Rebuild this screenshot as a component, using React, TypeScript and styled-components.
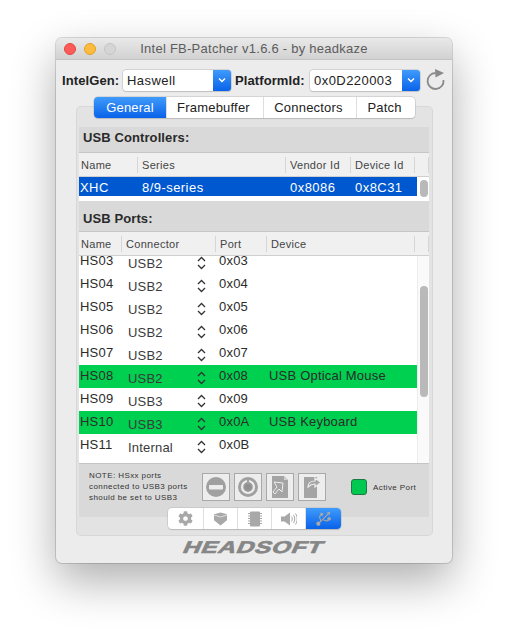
import React from "react";
import styled, { createGlobalStyle } from "styled-components";
import { FaCog, FaUsb } from "react-icons/fa";

const Global = createGlobalStyle`
  html, body { margin: 0; padding: 0; background: #fff; height: 100%; overflow: hidden; }
  body { font-family: "Liberation Sans", Arial, sans-serif; color: #222; }
  * { box-sizing: border-box; }
`;
const Page = styled.div`
  width: 508px; height: 637px; padding: 38px 56px 0; overflow: hidden;
`;
const Win = styled.div`
  width: 396px; height: 525px; border-radius: 6px; background: #ececec;
  box-shadow: 0 0 0 1px rgba(0,0,0,.14), 0 18px 45px rgba(0,0,0,.32);
  display: flex; flex-direction: column; align-items: stretch; overflow: hidden;
`;
const TitleBar = styled.div`
  height: 22px; flex: none; display: flex; align-items: center; padding-left: 8px; gap: 8px;
  position: relative;
  background: linear-gradient(#e9e9e9, #d2d2d2); border-bottom: 1px solid #c4c4c4;
`;
const Light = styled.span<{ $c: string; $b: string }>`
  width: 12px; height: 12px; border-radius: 50%; background: ${p => p.$c};
  border: 1px solid ${p => p.$b};
`;
const Title = styled.div`
  position: absolute; left: 0; right: 0; top: 3px; text-align: center; font-size: 13px; line-height: 16px;
  color: #5c5c5c; letter-spacing: .25px;
`;
const Toolbar = styled.div`
  height: 21px; margin-top: 10px; flex: none; display: flex; align-items: center; padding-left: 6px;
`;
const Label = styled.span<{ $w: number; $ml?: number }>`
  font-size: 13px; font-weight: 700; width: ${p => p.$w}px; margin-left: ${p => p.$ml ?? 0}px;
  color: #222; flex: none; letter-spacing: .1px;
`;
const Select = styled.div<{ $w: number }>`
  width: ${p => p.$w}px; height: 21px; flex: none; background: #fff; border-radius: 3px; display: flex;
  align-items: center; justify-content: space-between; padding-left: 4px; font-size: 13px; color: #222;
  box-shadow: 0 0 0 .5px #b9b9b9, 0 1px 1px rgba(0,0,0,.15); letter-spacing: .45px; overflow: hidden;
`;
const SelectBtn = styled.span`
  width: 18px; height: 21px; display: flex; align-items: center; justify-content: center;
  background: linear-gradient(#3f9bfb, #0a62e9);
`;
const Refresh = styled.svg`
  width: 24px; height: 24px; margin: -3px 0 0 4px; flex: none;
`;
const PanelWrap = styled.div`
  flex: none; margin: 16px 20px 0 21px; height: 428px; position: relative;
  background: #e3e3e3; border-radius: 4px; box-shadow: 0 0 0 1px #d7d7d7;
  padding: 20px 3px 0 2px;
`;
const Tabs = styled.div`
  position: absolute; top: -10px; left: 17px; height: 21px; display: flex; background: #fff; border-radius: 4px;
  box-shadow: 0 0 0 .5px #bcbcbc, 0 1px 1px rgba(0,0,0,.18); font-size: 13px; letter-spacing: .2px; overflow: hidden;
`;
const Tab = styled.div<{ $w: number; $on?: boolean }>`
  width: ${p => p.$w}px; display: flex; align-items: center; justify-content: center;
  color: ${p => (p.$on ? "#fff" : "#222")};
  background: ${p => (p.$on ? "linear-gradient(#3f9bfb, #0a62e9)" : "none")};
  & + & { border-left: 1px solid #dedede; padding-right: 3px; }
`;
const Inner = styled.div`
  height: 390px; background: #d9d9d9; display: flex; flex-direction: column;
`;
const SectionTitle = styled.div<{ $h: number; $pt?: number; $pb?: number }>`
  height: ${p => p.$h}px; padding: ${p => p.$pt ?? 0}px 0 ${p => p.$pb ?? 0}px 4px; flex: none; font-size: 13px; font-weight: 700; color: #2a2a2a;
  line-height: 16px; border-bottom: 1px solid #c6c6c6; letter-spacing: .1px;
  display: flex; align-items: center;
`;
const HeaderRow = styled.div<{ $cols: string }>`
  height: 24px; flex: none; display: grid; grid-template-columns: ${p => p.$cols}; background: #f0f0f0;
  border-bottom: 1px solid #cfcfcf; align-items: center; font-size: 11px; color: #444; letter-spacing: .3px;
`;
const HeaderCell = styled.div`
  height: 16px; line-height: 16px; padding-left: 4px; border-right: 1px solid #d6d6d6; overflow: hidden; white-space: nowrap;
  &:first-child { padding-left: 2px; }
`;
const CtrlBody = styled.div`
  height: 24px; flex: none; background: #fff; display: flex; align-items: flex-start;
`;
const CtrlRow = styled.div`
  width: 338px; height: 19px; padding: 1px 0 0 1px; background: #0058d0; color: #fff; font-size: 13px; letter-spacing: .45px;
  display: grid; grid-template-columns: 62px 148px 65px 1fr; align-items: center;
`;
const ThumbCol = styled.div`
  flex: 1; display: flex; justify-content: center; padding-top: 3px;
`;
const MiniThumb = styled.div`
  width: 8px; height: 17px; background: #b9b9b9; border-radius: 4px; margin-left: 1px;
`;
const PortsBody = styled.div`
  height: 208px; flex: none; background: #fff; display: flex; overflow: hidden; border-bottom: 1px solid #c4c4c4;
`;
const PortList = styled.div`
  width: 338px; margin-top: -6px; flex: none;
`;
const PortRow = styled.div<{ $on?: boolean }>`
  height: 23px; display: grid; grid-template-columns: 48px 69px 22px 50px 1fr; padding-left: 1px;
  background: ${p => (p.$on ? "#00d04f" : "transparent")}; font-size: 13px; color: #2b2b2b; letter-spacing: .2px;
  line-height: 21px;
`;
const ConnText = styled.span`
  padding-top: 3px; color: #3a3a3a;
`;
const Chev = styled.svg`
  width: 9px; height: 14px; margin: 6px 0 0 0;
`;
const Scroll = styled.div`
  flex: 1; border-left: 1px solid #ececec; background: #fafafa; padding: 30px 0 0 2px;
`;
const ScrollThumb = styled.div`
  width: 8px; height: 111px; border-radius: 4px; background: #b9b9b9;
`;
const Footer = styled.div`
  flex: 1; display: flex; padding: 5px 0 0 10px;
`;
const Note = styled.div`
  width: 113px; flex: none; padding-top: 1px; font-size: 8px; line-height: 11px; color: #333; letter-spacing: .42px;
`;
const IconButtons = styled.div`
  display: flex; gap: 4px; height: 28px; margin-top: 4px;
`;
const IconBtn = styled.div`
  width: 28px; height: 28px; border: 1px solid #a9a9a9; background: #ededed; display: flex; align-items: center; justify-content: center;
`;
const Active = styled.div`
  display: flex; align-items: center; gap: 6px; margin: 10px 0 0 25px; height: 16px; font-size: 8px; color: #333; letter-spacing: .4px;
`;
const Swatch = styled.span`
  width: 16px; height: 16px; background: #00c850; border: 1px solid #1c7a40; border-radius: 3px;
`;
const Seg = styled.div`
  position: absolute; left: 91px; top: 401px; height: 21px; display: flex; background: #fff; border-radius: 4px;
  box-shadow: 0 0 0 .5px #bcbcbc, 0 1px 1px rgba(0,0,0,.18); overflow: hidden;
`;
const SegItem = styled.div<{ $w: number; $on?: boolean }>`
  width: ${p => p.$w}px; display: flex; align-items: center; justify-content: center; color: #a8a8a8;
  background: ${p => (p.$on ? "linear-gradient(#3f9bfb, #0a62e9)" : "none")};
  & + & { border-left: 1px solid #dedede; }
`;
const UsbIcon = styled(FaUsb)`
  transform: rotate(-45deg);
`;
const LogoWrap = styled.div`
  flex: 1; display: flex; justify-content: center; align-items: flex-start; padding: 4px 0 0 0; overflow: hidden;
`;
const Logo = styled.div`
  font-family: "Liberation Sans", sans-serif; font-weight: 700; font-size: 17px; line-height: 17px;
  color: #868686; letter-spacing: .5px; transform: skewX(-24deg) scaleX(1.43); -webkit-text-stroke: .6px #868686;
`;

const Chevrons = () => (
  <Chev viewBox="0 0 9 14" fill="none" stroke="#333" strokeWidth="1.3">
    <path d="M1 5l3.500-3.500L8 5M1 9l3.500 3.500L8 9" />
  </Chev>
);
const ports: [string, string, string, string][] = [
  ["HS03", "USB2", "0x03", ""], ["HS04", "USB2", "0x04", ""], ["HS05", "USB2", "0x05", ""],
  ["HS06", "USB2", "0x06", ""], ["HS07", "USB2", "0x07", ""], ["HS08", "USB2", "0x08", "USB Optical Mouse"],
  ["HS09", "USB3", "0x09", ""], ["HS10", "USB3", "0x0A", "USB Keyboard"], ["HS11", "Internal", "0x0B", ""],
  ["HS12", "", "0x0C", ""],
];
const Arrow = () => (
  <svg width="10" height="7" viewBox="0 0 10 7" fill="none" stroke="#fff" strokeWidth="1.5"><path d="M2 1.500l3 3 3-3" /></svg>
);

export default function App() {
  return (
    <Page>
      <Global />
      <Win>
        <TitleBar>
          <Light $c="#fc5b57" $b="#e2463f" />
          <Light $c="#fdbc40" $b="#dfa023" />
          <Light $c="#d5d5d5" $b="#c4c4c4" />
          <Title>Intel FB-Patcher v1.6.6 - by headkaze</Title>
        </TitleBar>
        <Toolbar>
          <Label $w={61}>IntelGen:</Label>
          <Select $w={108}>Haswell<SelectBtn><Arrow /></SelectBtn></Select>
          <Label $w={75} $ml={4}>PlatformId:</Label>
          <Select $w={110}>0x0D220003<SelectBtn><Arrow /></SelectBtn></Select>
          <Refresh viewBox="0 0 24 24" fill="none" stroke="#8a8a8a" strokeWidth="1.8">
            <path d="M11.500 6A8 8 0 1 0 19.500 13" />
            <path d="M11 2l9 4-8.500 4.500z" fill="#8a8a8a" stroke="none" />
          </Refresh>
        </Toolbar>
        <PanelWrap>
          <Tabs>
            <Tab $w={72} $on>General</Tab>
            <Tab $w={97}>Framebuffer</Tab>
            <Tab $w={93}>Connectors</Tab>
            <Tab $w={59}>Patch</Tab>
          </Tabs>
          <Inner>
            <SectionTitle $h={26} $pb={4}>USB Controllers:</SectionTitle>
            <HeaderRow $cols="59px 148px 65px 64px 1fr">
              <HeaderCell>Name</HeaderCell><HeaderCell>Series</HeaderCell><HeaderCell>Vendor Id</HeaderCell><HeaderCell>Device Id</HeaderCell><HeaderCell />
            </HeaderRow>
            <CtrlBody>
              <CtrlRow><span>XHC</span><span>8/9-series</span><span>0x8086</span><span>0x8C31</span></CtrlRow>
              <ThumbCol><MiniThumb /></ThumbCol>
            </CtrlBody>
            <SectionTitle $h={31} $pt={5}>USB Ports:</SectionTitle>
            <HeaderRow $cols="43px 94px 51px 148px 1fr">
              <HeaderCell>Name</HeaderCell><HeaderCell>Connector</HeaderCell><HeaderCell>Port</HeaderCell><HeaderCell>Device</HeaderCell><HeaderCell />
            </HeaderRow>
            <PortsBody>
              <PortList>
                {ports.map(p => (
                  <PortRow key={p[0]} $on={!!p[3]}>
                    <span>{p[0]}</span>
                    <ConnText>{p[1]}</ConnText>
                    {p[1] ? <Chevrons /> : <span />}
                    <span>{p[2]}</span>
                    <span>{p[3]}</span>
                  </PortRow>
                ))}
              </PortList>
              <Scroll><ScrollThumb /></Scroll>
            </PortsBody>
            <Footer>
              <Note>NOTE: HSxx ports<br />connected to USB3 ports<br />should be set to USB3</Note>
              <IconButtons>
                <IconBtn>
                  <svg width="22" height="22" viewBox="0 0 22 22"><circle cx="11" cy="11" r="10" fill="#a0a0a0" /><rect x="4" y="9" width="14" height="4.500" rx="1" fill="#ededed" /></svg>
                </IconBtn>
                <IconBtn>
                  <svg width="22" height="22" viewBox="0 0 22 22" fill="none"><circle cx="11" cy="11" r="10" fill="#a0a0a0" /><circle cx="11" cy="11" r="6" stroke="#ededed" strokeWidth="2.200" /><circle cx="11" cy="11" r="3.500" fill="#909090" /><path d="M11 4v4" stroke="#a0a0a0" strokeWidth="2" /></svg>
                </IconBtn>
                <IconBtn>
                  <svg width="22" height="24" viewBox="0 0 22 24" fill="none"><path d="M3 1h12l4 4v18H3z" fill="#a4a4a4" /><path d="M15 1v4h4z" fill="#d0d0d0" /><path d="M5 7l9 1-1 9-3-3-4 5-2-2 4-5z" fill="#a4a4a4" stroke="#ededed" strokeWidth="1" /></svg>
                </IconBtn>
                <IconBtn>
                  <svg width="22" height="24" viewBox="0 0 22 24" fill="none"><path d="M3 2h13v21H3z" fill="#a4a4a4" /><path d="M7 12c0-4 3-6 7-6V3l6 4.500-6 4.500v-3c-3 0-5 1-7 3z" fill="#a4a4a4" stroke="#ededed" strokeWidth="1.200" /></svg>
                </IconBtn>
              </IconButtons>
              <Active><Swatch />Active Port</Active>
            </Footer>
          </Inner>
          <Seg>
            <SegItem $w={35}><FaCog size={15} /></SegItem>
            <SegItem $w={34}>
              <svg width="15" height="14" viewBox="0 0 15 14"><path d="M7.500 .5l6.500 1.800v6L7.500 13.500 1 8.300v-6z" fill="#a8a8a8" /><path d="M1 3l6.500 2L14 3" stroke="#fff" strokeWidth=".6" fill="none" /></svg>
            </SegItem>
            <SegItem $w={34}>
              <svg width="14" height="16" viewBox="0 0 14 16"><rect x="2" y=".5" width="10" height="15" rx="1" fill="#a8a8a8" /><path d="M0 2.500h14M0 5h14M0 7.500h14M0 10h14M0 12.500h14" stroke="#a8a8a8" strokeWidth="1.200" /></svg>
            </SegItem>
            <SegItem $w={34}>
              <svg width="16" height="14" viewBox="0 0 16 14" fill="none"><path d="M0 4.500h3.500L9 .5v13L3.500 9.500H0z" fill="#a8a8a8" /><path d="M10.500 4.500c1 1.500 1 3.500 0 5M12.500 3c1.700 2.500 1.700 5.500 0 8M14.500 1.500c2.200 3.500 2.200 7.500 0 11" stroke="#a8a8a8" /></svg>
            </SegItem>
            <SegItem $w={36} $on><UsbIcon size={19} /></SegItem>
          </Seg>
        </PanelWrap>
        <LogoWrap><Logo>HEADSOFT</Logo></LogoWrap>
      </Win>
    </Page>
  );
}
